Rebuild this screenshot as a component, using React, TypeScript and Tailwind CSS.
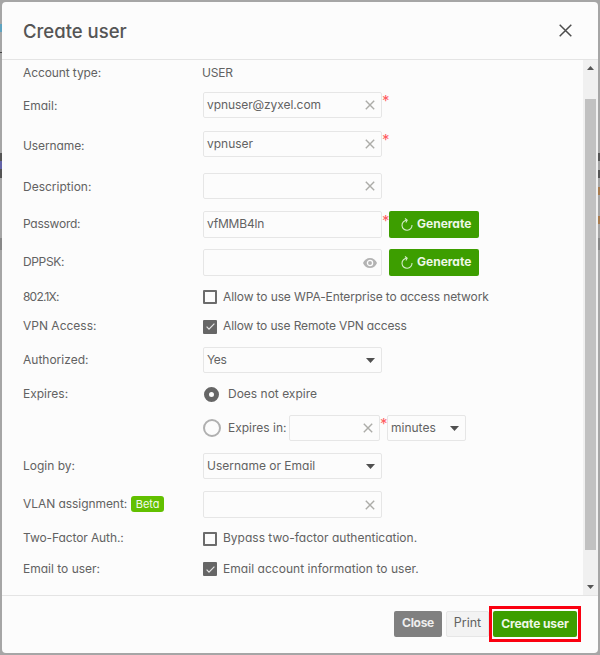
import React, { useState } from 'react';

/**
 * CreateUserDialog
 * Modal for creating a VPN / WiFi user account.
 */

function ClearIcon() {
  return (
    <svg width="10" height="10" viewBox="0 0 10 10" className="block" fill="none" stroke="#acaca8" strokeWidth="1.4">
      <path d="M0.8 0.8l8.4 8.4M9.2 0.8l-8.4 8.4" />
    </svg>
  );
}

function EyeIcon() {
  return (
    <svg width="14" height="10" viewBox="0 0 14 10" className="block">
      <path d="M7 0C3.8 0 1.2 2 0 5c1.2 3 3.8 5 7 5s5.8-2 7-5c-1.2-3-3.8-5-7-5z" fill="#b3b3b3" />
      <circle cx="7" cy="5" r="2.6" fill="none" stroke="#fcfcfc" strokeWidth="1.3" />
    </svg>
  );
}

function Caret() {
  return (
    <svg width="9" height="5" viewBox="0 0 9 5" className="block">
      <path d="M0 0h9L4.5 5z" fill="#505050" />
    </svg>
  );
}

function ReloadIcon() {
  return (
    <svg width="12" height="13" viewBox="0 0 12 13" className="block" fill="none" stroke="#d4ecc8" strokeWidth="1.1">
      <path d="M5.800 2.300A5 5 0 1 0 11 7" />
      <path d="M4 0.500l2.200 1.700L4.900 4.600" />
    </svg>
  );
}

interface FieldProps {
  value?: string;
  icon?: 'clear' | 'eye' | 'caret' | 'none';
  className?: string;
  textClass?: string;
}

function Field({ value = '', icon = 'clear', className = 'h-[26px] w-[179px]', textClass = '' }: FieldProps) {
  return (
    <div className={`flex shrink-0 items-center justify-between rounded-[2px] border border-[#e6e6e6] bg-[#fcfcfc] pl-[3px] pr-[6px] ${className}`}>
      <span className={`whitespace-nowrap ${textClass}`}>{value}</span>
      {icon === 'clear' && <ClearIcon />}
      {icon === 'eye' && <div className="-mr-[2px]"><EyeIcon /></div>}
      {icon === 'caret' && <Caret />}
    </div>
  );
}

function Required() {
  return <span className="h-[26px] w-[7px] shrink-0 text-[15px] leading-[17px] text-[#ff5c62]">*</span>;
}

function GenerateButton() {
  return (
    <button type="button" className="flex h-[27px] w-[90px] shrink-0 items-center gap-[4px] rounded-[2px] bg-[#3d9e00] pl-3 font-bold text-[#eef8e8]">
      <ReloadIcon />
      <span className="pb-px text-xs">Generate</span>
    </button>
  );
}

interface CheckProps {
  label: string;
  defaultChecked?: boolean;
  textClass?: string;
}

function Check({ label, defaultChecked = false, textClass = '' }: CheckProps) {
  const [checked, setChecked] = useState(defaultChecked);
  return (
    <label className="flex items-center gap-[6px]" onClick={() => setChecked(!checked)}>
      {checked ? (
        <span className="flex size-[14px] items-center justify-center rounded-[1px] bg-[#666]">
          <svg width="9" height="7" viewBox="0 0 9 7" fill="none" stroke="#e6e6e6" strokeWidth="1.2">
            <path d="M0.6 3.7l2.4 2.4L8.4 0.7" />
          </svg>
        </span>
      ) : (
        <span className="size-[14px] rounded-[1px] border-2 border-[#6c6c6c] bg-[#fcfcfc]" />
      )}
      <span className={`whitespace-nowrap pb-px ${textClass}`}>{label}</span>
    </label>
  );
}

interface RowProps {
  label?: React.ReactNode;
  height: string;
  labelClass?: string;
  children: React.ReactNode;
}

function Row({ label, height, labelClass = 'pb-px', children }: RowProps) {
  return (
    <div className={`flex items-center ${height}`}>
      <div className={`flex w-[180px] shrink-0 items-center whitespace-nowrap ${labelClass}`}>{label}</div>
      {children}
    </div>
  );
}

export default function App() {
  return (
    <div className="relative h-[655px] w-[600px] overflow-hidden bg-[#a6a6a6] p-[2px] font-['Inter','Liberation_Sans',sans-serif] text-xs leading-[16px] text-[#626262] [font-feature-settings:'cv11']">
      {/* Slivers of the dimmed page behind the dialog */}
      <div className="absolute left-0 top-6 h-2 w-[2px] bg-[#5fa3c0]" />
      <div className="absolute left-0 top-[52px] h-px w-[2px] bg-[#444]" />
      <div className="absolute left-0 top-[153px] h-2 w-[2px] bg-[#555]" />
      <div className="absolute left-0 top-[161px] h-2 w-[2px] bg-[#6464a8]" />
      <div className="absolute left-0 top-[169px] h-[9px] w-[2px] bg-[#555]" />
      <div className="absolute left-0 top-[238px] h-3 w-[2px] bg-[#888]" />
      <div className="absolute right-0 top-[153px] h-2 w-[2px] bg-[#555]" />
      <div className="absolute right-0 top-[170px] h-2 w-[2px] bg-[#555]" />
      <div className="absolute right-0 top-[187px] h-2 w-[2px] bg-[#a87c50]" />
      <div className="absolute right-0 top-[216px] h-2 w-[2px] bg-[#a87c50]" />
      <div className="absolute right-0 top-[238px] h-3 w-[2px] bg-[#888]" />

      <div className="flex h-[651px] w-[596px] flex-col overflow-hidden rounded-[4px] bg-[#fcfcfc]">
        <header className="flex h-[58px] shrink-0 items-center justify-between border-b border-[#e4e4e4] pl-[21px] pr-[26px]">
          <h1 className="pt-px text-[18.5px] font-medium leading-6 text-[#555]">Create user</h1>
          <svg width="13" height="13" viewBox="0 0 13 13" fill="none" stroke="#4d4d4d" strokeWidth="1.5">
            <path d="M0.7 0.7l11.6 11.6M12.3 0.7L0.7 12.3" />
          </svg>
        </header>

        <main className="flex h-[535px] shrink-0">
          <div className="min-w-0 flex-1 pl-[21px]">
            <Row label={<span className="tracking-[-0.1px]">Account type:</span>} height="h-6" labelClass="pt-px">
              <span className="-ml-px pt-px tracking-[-0.2px]">USER</span>
            </Row>
            <Row label="Email:" height="h-[42px]" labelClass="pt-px">
              <Field value="vpnuser@zyxel.com" textClass="tracking-[-0.08px]" />
              <Required />
            </Row>
            <Row label={<span className="tracking-[-0.1px]">Username:</span>} height="h-[35px]" labelClass="pt-1">
              <Field value="vpnuser" />
              <Required />
            </Row>
            <Row label="Description:" height="h-[50px]" labelClass="pt-px">
              <Field />
            </Row>
            <Row label={<span className="tracking-[-0.25px]">Password:</span>} height="h-[27px]">
              <Field value="vfMMB4ln" icon="none" className="h-[27px] w-[179px]" textClass="pb-px tracking-[-0.2px]" />
              <Required />
              <GenerateButton />
            </Row>
            <Row label={<span className="tracking-[-0.35px]">DPPSK:</span>} height="h-[49px]">
              <Field icon="eye" className="mr-[7px] h-[27px] w-[179px]" />
              <GenerateButton />
            </Row>
            <Row label={<span className="tracking-[-0.8px]">802.1X:</span>} height="h-5">
              <Check label="Allow to use WPA-Enterprise to access network" textClass="tracking-[-0.11px]" />
            </Row>
            <Row label="VPN Access:" height="h-[39px]">
              <Check label="Allow to use Remote VPN access" defaultChecked textClass="tracking-[-0.14px]" />
            </Row>
            <Row label="Authorized:" height="h-7">
              <Field value="Yes" icon="caret" textClass="tracking-[-0.4px]" />
            </Row>
            <Row label="Expires:" height="h-[41px]">
              <span className="ml-px size-[15px] rounded-full border-[5px] border-[#666]" />
              <span className="ml-[9px] pb-px">Does not expire</span>
            </Row>
            <Row height="h-[26px]">
              <span className="size-[18px] rounded-full border-2 border-[#b0b0b0]" />
              <span className="ml-[7px] w-[61px] whitespace-nowrap">Expires in:</span>
              <Field className="h-[26px] w-[91px]" />
              <Required />
              <Field value="minutes" icon="caret" className="h-[26px] w-[79px]" />
            </Row>
            <Row label="Login by:" height="h-[50px]">
              <Field value="Username or Email" icon="caret" />
            </Row>
            <Row
              label={
                <>
                  <span className="tracking-[-0.06px]">VLAN assignment:</span>
                  <span className="ml-1 h-4 w-[33px] rounded-[3px] bg-[#62c000] text-center text-[11px] text-[#f2faec]">Beta</span>
                </>
              }
              height="h-[27px]"
            >
              <Field className="h-[27px] w-[179px]" />
            </Row>
            <Row label={<span className="tracking-[-0.1px]">Two-Factor Auth.:</span>} height="h-[41px]">
              <Check label="Bypass two-factor authentication." />
            </Row>
            <Row label="Email to user:" height="h-5">
              <Check label="Email account information to user." defaultChecked textClass="tracking-[0.04px]" />
            </Row>
          </div>

          {/* Scrollbar */}
          <div className="flex w-[15px] shrink-0 flex-col items-center bg-[#f0f0f0] pt-[6px]">
            <svg width="7" height="4" viewBox="0 0 7 4"><path d="M0 4h7L3.5 0z" fill="#555" /></svg>
            <div className="mt-[29px] h-[451px] w-[11px] bg-[#c1c1c1]" />
            <svg className="mt-[35px]" width="7" height="4" viewBox="0 0 7 4"><path d="M0 0h7L3.5 4z" fill="#555" /></svg>
          </div>
        </main>

        <footer className="flex flex-1 items-start justify-end gap-1 border-t border-[#e4e4e4] pr-[17px] pt-[10px]">
          <button type="button" className="mt-[5px] h-[26px] w-12 rounded-[2px] bg-[#808080] pb-[2px] text-xs font-bold tracking-[-0.3px] text-[#eee]">Close</button>
          <div className="flex">
            <button type="button" className="mt-[5px] h-[26px] w-[43px] rounded-[2px] border border-[#e6e6e6] bg-[#f3f3f3] pb-[2px] text-[12.5px]">Print</button>
            <div className="border-3 border-[#fa0010] px-px py-[2px]">
              <button type="button" className="block h-[26px] w-[84px] rounded-[2px] bg-[#3d9e00] text-xs font-bold tracking-[-0.1px] text-[#eef8e8]">Create user</button>
            </div>
          </div>
        </footer>
      </div>
    </div>
  );
}
